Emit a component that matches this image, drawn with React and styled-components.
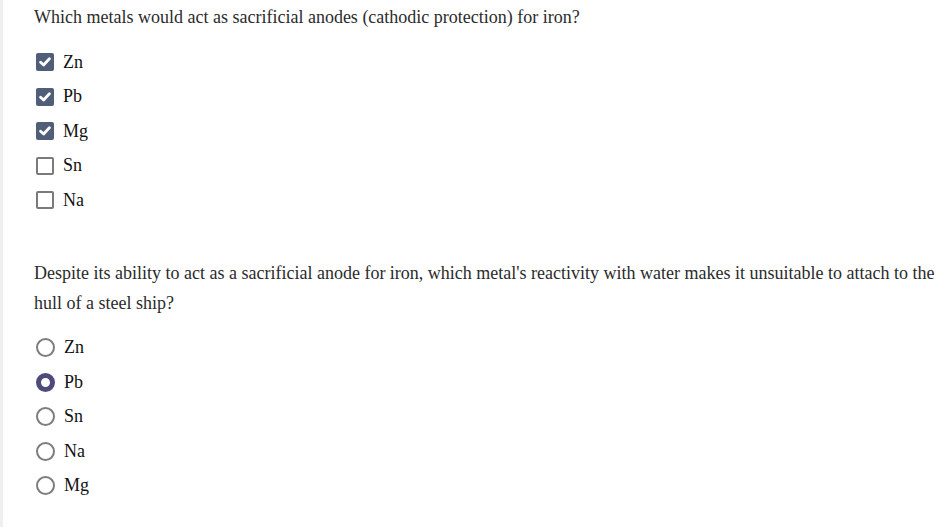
import React, { useState } from "react";
import styled, { createGlobalStyle } from "styled-components";

const Global = createGlobalStyle`
  html, body { margin: 0; padding: 0; background: #fff; }
  body { font-family: "Liberation Serif", "Times New Roman", serif; }
`;

const Page = styled.div`
  min-height: 527px;
  box-sizing: border-box;
  border-left: 3px solid #efefef;
  padding: 2px 0 0 31px;
`;

const Question = styled.section`
  display: flex;
  flex-direction: column;
  & + & { margin-top: 40px; }
`;

const Prompt = styled.p`
  margin: 0 0 13px;
  font-size: 18px;
  line-height: 30px;
  color: #2b2b2b;
`;

const Options = styled.div`
  display: flex;
  flex-direction: column;
`;

const Option = styled.label`
  display: flex;
  align-items: center;
  gap: 9px;
  height: 34.5px;
  padding-left: 2px;
  font-size: 18px;
  color: #111;
  cursor: pointer;
`;

const Box = styled.span`
  box-sizing: border-box;
  width: 18px;
  height: 18px;
  border-radius: 2px;
  display: flex;
  align-items: center;
  justify-content: center;
  background: ${(p) => (p.$on ? "#505e78" : "#fff")};
  border: ${(p) => (p.$on ? "none" : "2px solid #7a7a7a")};
`;

const Radio = styled.span`
  box-sizing: border-box;
  width: 19px;
  height: 19px;
  border-radius: 50%;
  background: #fff;
  border: ${(p) => (p.$on ? "5.5px solid #4e4a7c" : "2px solid #7d7d7d")};
`;

const Check = () => (
  <svg width="12" height="10" viewBox="0 0 12 10">
    <path d="M1.6 5.2 L4.6 8 L10.4 1.8" fill="none" stroke="#fff" strokeWidth="2.8" strokeLinecap="round" strokeLinejoin="round" />
  </svg>
);

export default function App() {
  const [checked, setChecked] = useState({ Zn: true, Pb: true, Mg: true, Sn: false, Na: false });
  const [choice, setChoice] = useState("Pb");

  return (
    <>
      <Global />
      <Page>
        <Question>
          <Prompt>Which metals would act as sacrificial anodes (cathodic protection) for iron?</Prompt>
          <Options>
            {["Zn", "Pb", "Mg", "Sn", "Na"].map((m) => (
              <Option key={m} onClick={() => setChecked({ ...checked, [m]: !checked[m] })}>
                <Box $on={checked[m]}>{checked[m] && <Check />}</Box>
                {m}
              </Option>
            ))}
          </Options>
        </Question>
        <Question>
          <Prompt>
            Despite its ability to act as a sacrificial anode for iron, which metal's reactivity with water makes it unsuitable to attach to the hull of a steel ship?
          </Prompt>
          <Options>
            {["Zn", "Pb", "Sn", "Na", "Mg"].map((m) => (
              <Option key={m} onClick={() => setChoice(m)}>
                <Radio $on={choice === m} />
                {m}
              </Option>
            ))}
          </Options>
        </Question>
      </Page>
    </>
  );
}
